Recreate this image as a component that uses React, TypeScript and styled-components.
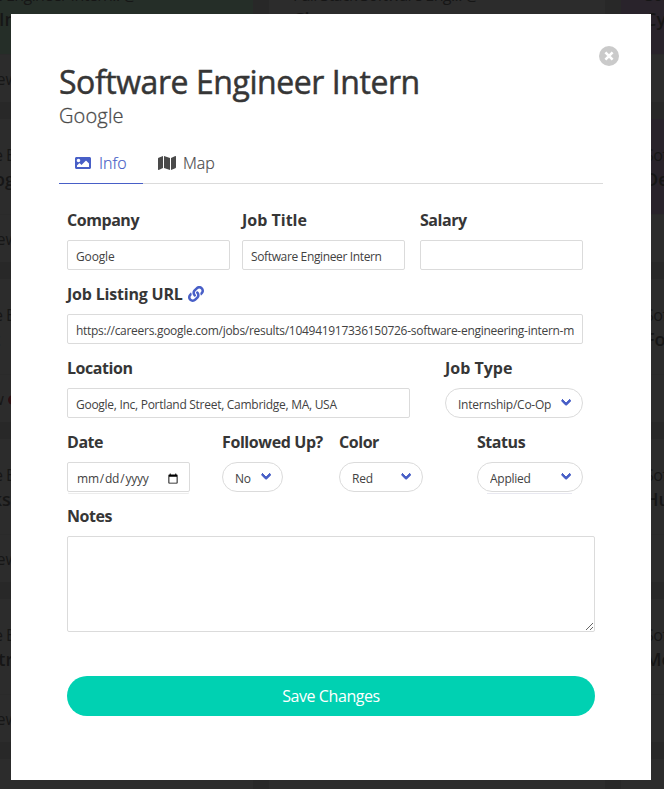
import React from "react";
import styled, { createGlobalStyle } from "styled-components";
import { FaImage, FaLink, FaMap } from "react-icons/fa";

const GlobalStyle = createGlobalStyle`
  *, *::before, *::after { box-sizing: border-box; }
  html, body { margin: 0; height: 100%; overflow: hidden; background: #282828; }
  body { font-family: "Open Sans", "Noto Sans", sans-serif; font-size: 16px; line-height: 1.5; color: #4a4a4a; }
  input, select, textarea, button { font: inherit; margin: 0; }
`;

const Page = styled.div`
  position: relative;
  width: 664px;
  height: 789px;
  overflow: hidden;
`;

const Board = styled.div`
  display: grid;
  grid-template-columns: repeat(3, 336px);
  gap: 16px;
  width: max-content;
  margin: -41px 0 0 -83px;
`;

const BoardColumn = styled.div`
  display: flex;
  flex-direction: column;
  gap: 17px;
`;

const Card = styled.article`
  height: 143px;
  background: #2c2c2c;
  color: #161616;
  white-space: nowrap;
  overflow: hidden;
`;

const CardBody = styled.div<{ $tint?: string }>`
  height: 95px;
  padding: 24px 24px 0;
  background: ${(p) => p.$tint ?? "transparent"};
`;

const CardRole = styled.div`
  height: 24px;
  font-size: 16px;
  line-height: 25px;
  letter-spacing: -0.6px;
`;

const CardCompany = styled.div<{ $indent: number }>`
  margin-left: ${(p) => p.$indent}px;
  font-size: 18px;
  line-height: 24px;
  font-weight: 600;
`;

const CardFooter = styled.div<{ $pad: number }>`
  height: 48px;
  padding: 12px 0 0 ${(p) => p.$pad}px;
  font-size: 16px;
  border-top: 1px solid #2a2a2a;
`;

const Alert = styled.span`
  display: inline-block;
  width: 10px;
  height: 10px;
  margin-left: 4px;
  border-radius: 5px;
  background: #2c0e10;
`;

const Modal = styled.section`
  position: absolute;
  left: 11px;
  top: 14px;
  width: 640px;
  height: 766px;
  padding: 48px;
  background: #fff;
`;

const CloseButton = styled.button`
  position: absolute;
  right: 32px;
  top: 32px;
  width: 20px;
  height: 20px;
  padding: 0;
  border: 0;
  background: none;
  svg { display: block; }
`;

const Title = styled.h1`
  margin: 0;
  height: 40px;
  font-size: 32px;
  line-height: 40px;
  font-weight: 400;
  letter-spacing: -0.44px;
  color: #363636;
  -webkit-text-stroke: 0.5px #363636;
  white-space: nowrap;
`;

const Subtitle = styled.p`
  margin: 0;
  height: 28px;
  font-size: 20px;
  line-height: 28px;
  font-weight: 300;
  letter-spacing: 0.15px;
  -webkit-text-stroke: 0.3px #4a4a4a;
`;

const Tabs = styled.nav`
  display: flex;
  height: 40px;
  width: 544px;
  margin-top: 14px;
  border-bottom: 1px solid #dbdbdb;
`;

const Tab = styled.a<{ $active?: boolean }>`
  display: flex;
  align-items: center;
  width: ${(p) => (p.$active ? 84 : 88)}px;
  height: 40px;
  padding-left: ${(p) => (p.$active ? 16 : 15)}px;
  padding-bottom: 2px;
  gap: ${(p) => (p.$active ? 8 : 7)}px;
  font-weight: 300;
  letter-spacing: -0.05px;
  color: ${(p) => (p.$active ? "#485fc7" : "#4a4a4a")};
  -webkit-text-stroke: 0.2px currentColor;
  border-bottom: 1px solid ${(p) => (p.$active ? "#485fc7" : "transparent")};
`;

const Form = styled.form`
  display: flex;
  flex-direction: column;
  width: 528px;
  margin: 24px 0 0 8px;
`;

const Row = styled.div<{ $columns: string }>`
  display: grid;
  grid-template-columns: ${(p) => p.$columns};
  height: 74px;
`;

const Label = styled.label<{ $spacing?: number }>`
  display: flex;
  align-items: center;
  gap: 5px;
  height: 24px;
  margin-bottom: 8px;
  font-weight: 700;
  color: #363636;
  white-space: nowrap;
  letter-spacing: ${(p) => p.$spacing ?? -0.45}px;
  svg { color: #485fc7; }
`;

const Input = styled.input<{ $w: number; $spacing?: number; $date?: boolean }>`
  display: block;
  width: ${(p) => p.$w}px;
  height: 30px;
  padding: ${(p) => (p.$date ? 3 : 2)}px 8px 0;
  border: 1px solid #dbdbdb;
  border-radius: 2px;
  outline: 0;
  background: #fff;
  color: #424242;
  font-size: 12px;
  letter-spacing: ${(p) => p.$spacing ?? -0.15}px;
  box-shadow: ${(p) => (p.$date ? "0 2px 0 -1px #fff, 0 3px 0 -1px #ececec" : "none")};
`;

const SelectBox = styled.div<{ $w: number; $shadow?: boolean }>`
  position: relative;
  width: ${(p) => p.$w}px;
  height: 30px;
  &::before {
    content: "";
    position: absolute;
    display: ${(p) => (p.$shadow ? "block" : "none")};
    left: 10px;
    right: 11px;
    bottom: -2px;
    height: 1px;
    background: #e8e8f0;
  }
  &::after {
    content: "";
    position: absolute;
    top: 50%;
    right: 14px;
    width: 7.5px;
    height: 7.5px;
    margin-top: -6px;
    border: 3px solid #485fc7;
    border-top: 0;
    border-right: 0;
    border-radius: 2px;
    transform: rotate(-45deg);
    pointer-events: none;
  }
  select {
    display: block;
    width: 100%;
    height: 30px;
    padding: 3px 0 0 12px;
    appearance: none;
    border: 1px solid #dbdbdb;
    border-radius: 15px;
    background: #fff;
    color: #424242;
    font-size: 12px;
    letter-spacing: -0.25px;
  }
`;

const Notes = styled.textarea`
  display: block;
  width: 528px;
  height: 96px;
  border: 1px solid #dbdbdb;
  border-radius: 2px;
  resize: vertical;
`;

const SaveButton = styled.button`
  height: 40px;
  margin-top: 44px;
  padding: 0;
  border: 0;
  border-radius: 20px;
  background: #00d1b2;
  color: #fff;
  letter-spacing: -0.42px;
`;

interface CardData { role?: string; company?: string; indent?: number; tint?: string; footer?: string; pad?: number; alert?: boolean }

const intern = "Software Engineer Intern.. @";

const columns: CardData[][] = [
  [
    { role: intern, company: "Instagram", indent: 58, tint: "#252e28", footer: "View", pad: 66 },
    { role: intern, company: "Google", indent: 29, footer: "View", pad: 66 },
    { role: intern, company: "Reddit", indent: 3, footer: "View", pad: 66 },
    { role: intern, company: "Starbucks", indent: -16, footer: "View", pad: 66 },
    { role: intern, company: "Electric", indent: 23, footer: "View", pad: 66 },
    {},
  ],
  [{ role: "Full Stack Software Eng... @", company: "Cisco" }, {}, {}, {}, {}, {}],
  [
    { role: "Software Engineer @", company: "Cypress", tint: "#29232b" },
    { role: "Software Engineer @", company: "Dell", tint: "#29232b" },
    { role: "Software Engineer @", company: "Ford" },
    { role: "Software Engineer @", company: "Hulu" },
    { role: "Software Engineer @", company: "Meta" },
    {},
  ],
];
columns[0][2].pad = 52;
columns[0][2].alert = true;

function Select({ value, width, shadow }: { value: string; width: number; shadow?: boolean }) {
  return (
    <SelectBox $w={width} $shadow={shadow}>
      <select defaultValue={value} aria-label={value}><option>{value}</option></select>
    </SelectBox>
  );
}

export default function App() {
  return (
    <Page>
      <GlobalStyle />
      <Board aria-hidden="true">
        {columns.map((cards, c) => (
          <BoardColumn key={c}>
            {cards.map((card, i) => (
              <Card key={i}>
                <CardBody $tint={card.tint}>
                  <CardRole>{card.role}</CardRole>
                  <CardCompany $indent={card.indent ?? 0}>{card.company}</CardCompany>
                </CardBody>
                <CardFooter $pad={card.pad ?? 24}>{card.footer}{card.alert && <Alert />}</CardFooter>
              </Card>
            ))}
          </BoardColumn>
        ))}
      </Board>
      <Modal role="dialog">
        <CloseButton type="button" aria-label="Close">
          <svg width="20" height="20" viewBox="0 0 20 20">
            <circle cx="10" cy="10" r="10" fill="#cacaca" />
            <path d="M6.4 6.4l7.2 7.2M13.6 6.4l-7.2 7.2" stroke="#fff" strokeWidth="2.6" />
          </svg>
        </CloseButton>
        <Title>Software Engineer Intern</Title>
        <Subtitle>Google</Subtitle>
        <Tabs>
          <Tab $active><FaImage size={16} />Info</Tab>
          <Tab><FaMap size={18} />Map</Tab>
        </Tabs>
        <Form>
          <Row $columns="175px 178px 163px">
            <div><Label>Company</Label><Input $w={163} defaultValue="Google" /></div>
            <div><Label $spacing={0}>Job Title</Label><Input $w={163} $spacing={-0.36} defaultValue="Software Engineer Intern" /></div>
            <div><Label>Salary</Label><Input $w={163} /></div>
          </Row>
          <Row $columns="1fr">
            <div>
              <Label $spacing={-0.2}>Job Listing URL <FaLink size={16} /></Label>
              <Input $w={516} $spacing={-0.285} defaultValue="https://careers.google.com/jobs/results/104941917336150726-software-engineering-intern-m" />
            </div>
          </Row>
          <Row $columns="378px 138px">
            <div><Label>Location</Label><Input $w={343} $spacing={-0.28} defaultValue="Google, Inc, Portland Street, Cambridge, MA, USA" /></div>
            <div><Label $spacing={0}>Job Type</Label><Select width={138} value="Internship/Co-Op" /></div>
          </Row>
          <Row $columns="155px 117px 138px 106px">
            <div><Label>Date</Label><Input type="date" $w={123} $spacing={-0.22} $date /></div>
            <div><Label $spacing={-0.4}>Followed Up?</Label><Select width={61} value="No" /></div>
            <div><Label>Color</Label><Select width={84} value="Red" /></div>
            <div><Label>Status</Label><Select width={106} value="Applied" shadow /></div>
          </Row>
          <Label>Notes</Label>
          <Notes aria-label="Notes" />
          <SaveButton type="button">Save Changes</SaveButton>
        </Form>
      </Modal>
    </Page>
  );
}
